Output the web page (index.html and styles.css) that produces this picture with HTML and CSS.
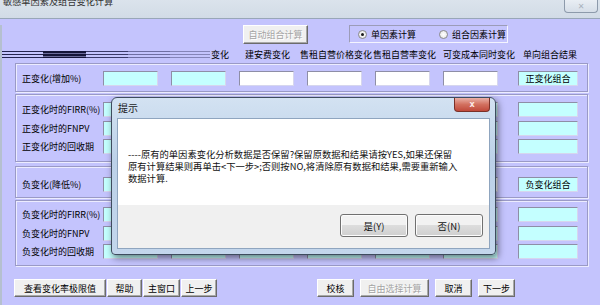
FILE: index.html
```html
<!DOCTYPE html>
<html lang="zh-CN">
<head>
    <meta charset="UTF-8">
    <meta name="viewport" content="width=device-width, initial-scale=1.0">
    <title>敏感单因素及组合变化计算</title>
    <link rel="stylesheet" href="styles.css">
</head>
<body>
    <div class="window">
        <div class="titlebar">
            <span class="title">敏感单因素及组合变化计算</span>
            <span class="close">✕</span>
        </div>

        <div class="client">
            <div class="toolbar">
                <button class="btn disabled">自动组合计算</button>
                <div class="radio-box">
                    <label class="radio"><span class="dot checked"></span>单因素计算</label>
                    <label class="radio second"><span class="dot"></span>组合因素计算</label>
                </div>
            </div>

            <!-- cabecera de columnas -->
            <div class="colhead">
                <div class="squish">
                    <span class="s1"></span><span class="s2"></span><span class="s3"></span><span class="s4"></span><span class="s5"></span>
                </div>
                <span>变化</span>
                <span>建安费变化</span>
                <span>售租自营价格变化</span>
                <span>售租自营率变化</span>
                <span>可变成本同时变化</span>
                <span>单向组合结果</span>
            </div>

            <div class="group g1">
                <div class="row">
                    <span class="lbl">正变化(增加%)</span>
                    <div class="cells">
                        <span class="box cyan"></span><span class="box cyan"></span>
                        <span class="box"></span><span class="box"></span><span class="box"></span><span class="box"></span>
                    </div>
                    <span class="box cyan result">正变化组合</span>
                </div>
            </div>

            <div class="group g2">
                <div class="row">
                    <span class="lbl">正变化时的FIRR(%)</span>
                    <div class="cells">
                        <span class="box cyan"></span><span class="box cyan"></span><span class="box cyan"></span>
                        <span class="box cyan"></span><span class="box cyan"></span><span class="box cyan"></span>
                    </div>
                    <span class="box cyan result"></span>
                </div>
                <div class="row">
                    <span class="lbl">正变化时的FNPV</span>
                    <div class="cells">
                        <span class="box cyan"></span><span class="box cyan"></span><span class="box cyan"></span>
                        <span class="box cyan"></span><span class="box cyan"></span><span class="box cyan"></span>
                    </div>
                    <span class="box cyan result"></span>
                </div>
                <div class="row">
                    <span class="lbl">正变化时的回收期</span>
                    <div class="cells">
                        <span class="box cyan"></span><span class="box cyan"></span><span class="box cyan"></span>
                        <span class="box cyan"></span><span class="box cyan"></span><span class="box cyan"></span>
                    </div>
                    <span class="box cyan result"></span>
                </div>
            </div>

            <div class="group g3">
                <div class="row">
                    <span class="lbl">负变化(降低%)</span>
                    <div class="cells">
                        <span class="box cyan"></span><span class="box cyan"></span>
                        <span class="box"></span><span class="box"></span><span class="box"></span><span class="box"></span>
                    </div>
                    <span class="box cyan result">负变化组合</span>
                </div>
            </div>

            <div class="group g4">
                <div class="row">
                    <span class="lbl">负变化时的FIRR(%)</span>
                    <div class="cells">
                        <span class="box cyan"></span><span class="box cyan"></span><span class="box cyan"></span>
                        <span class="box cyan"></span><span class="box cyan"></span><span class="box cyan"></span>
                    </div>
                    <span class="box cyan result"></span>
                </div>
                <div class="row">
                    <span class="lbl">负变化时的FNPV</span>
                    <div class="cells">
                        <span class="box cyan"></span><span class="box cyan"></span><span class="box cyan"></span>
                        <span class="box cyan"></span><span class="box cyan"></span><span class="box cyan"></span>
                    </div>
                    <span class="box cyan result"></span>
                </div>
                <div class="row">
                    <span class="lbl">负变化时的回收期</span>
                    <div class="cells">
                        <span class="box cyan"></span><span class="box cyan"></span><span class="box cyan"></span>
                        <span class="box cyan"></span><span class="box cyan"></span><span class="box cyan"></span>
                    </div>
                    <span class="box cyan result"></span>
                </div>
            </div>

            <div class="footer">
                <div class="left">
                    <button class="btn b-limite">查看变化率极限值</button>
                    <button class="btn b-ayuda">帮助</button>
                    <button class="btn b-main">主窗口</button>
                    <button class="btn b-prev">上一步</button>
                </div>
                <div class="right">
                    <button class="btn b-small">校核</button>
                    <button class="btn b-libre disabled">自由选择计算</button>
                    <button class="btn b-small">取消</button>
                    <button class="btn b-small">下一步</button>
                </div>
            </div>
        </div>

        <!-- cuadro de aviso -->
        <div class="dialog">
            <div class="dlg-title">
                <span class="dlg-text">提示</span>
                <span class="dlg-close">x</span>
            </div>
            <div class="dlg-body">
                <div class="msg">
                    <p>----原有的单因素变化分析数据是否保留?保留原数据和结果请按YES,如果还保留</p>
                    <p>原有计算结果则再单击&lt;下一步&gt;;否则按NO,将清除原有数据和结果,需要重新输入</p>
                    <p>数据计算.</p>
                </div>
                <div class="actions">
                    <button>是(Y)</button>
                    <button>否(N)</button>
                </div>
            </div>
        </div>
    </div>
</body>
</html>
```

FILE: styles.css
```css
* {
    box-sizing: border-box;
}

body {
    margin: 0;
    width: 600px;
    height: 305px;
    overflow: hidden;
    font-family: "Noto Sans CJK SC", "Noto Sans", sans-serif;
    font-size: 9px;
    color: #000;
    background-color: #c4c4fd;
}

.window {
    position: relative;
    width: 600px;
    height: 305px;
}

.titlebar {
    height: 19px;
    display: flex;
    justify-content: space-between;
    align-items: flex-start;
    background: linear-gradient(#dbe3ec, #d2dbe6);
    border-bottom: 1px solid #98a6b8;
    overflow: hidden;
}

.title {
    display: block;
    margin-top: -4px;
    padding-left: 3px;
    line-height: 10px;
    font-size: 9.2px;
    color: #333;
}

.close {
    width: 34px;
    height: 13px;
    margin-right: 2px;
    border: 1px solid #8d9aab;
    border-top: 0;
    border-radius: 0 0 4px 4px;
    background: linear-gradient(#e9eef4, #d6dee8);
    color: #a9b2bd;
    font-family: "DejaVu Sans", sans-serif;
    font-size: 8px;
    display: flex;
    align-items: center;
    justify-content: center;
}

.client {
    border-left: 2px solid #b5c0cf;
    height: 286px;
}

button {
    font-family: inherit;
    font-size: 9px;
    padding: 0;
    margin: 0;
    cursor: pointer;
}

.btn {
    background-color: #f0f0f0;
    color: #000;
    border: 1px solid;
    border-color: #fff #6b6b6b #6b6b6b #fff;
    box-shadow: inset -1px -1px 0 #a8a8a8;
    height: 18px;
    white-space: nowrap;
}

.btn.disabled {
    color: #a3a3a3;
    text-shadow: 1px 1px 0 #fff;
}

.toolbar {
    display: flex;
    align-items: flex-start;
    margin-top: 6px;
    padding-left: 241px;
    height: 19px;
}

.toolbar .btn {
    width: 65px;
    height: 19px;
}

.radio-box {
    margin-left: 41px;
    width: 159px;
    height: 18px;
    display: flex;
    align-items: center;
    padding-left: 8px;
    border: 1px solid;
    border-color: #9c9cb8 #f4f4ff #f4f4ff #9c9cb8;
}

.radio {
    display: flex;
    align-items: center;
    gap: 4px;
}

.radio.second {
    margin-left: 23px;
}

.dot {
    width: 9px;
    height: 9px;
    border-radius: 50%;
    border: 1px solid #8a8a8a;
    background: radial-gradient(#ffffff, #e2e2e2);
    display: flex;
    align-items: center;
    justify-content: center;
}

.dot.checked::after {
    content: "";
    width: 3px;
    height: 3px;
    border-radius: 50%;
    background-color: #1a1a1a;
}

.colhead {
    display: grid;
    grid-template-columns: 209px 34px 55px 73px 70px 80px 60px;
    align-items: center;
    height: 11px;
    margin-top: 5px;
    white-space: nowrap;
    line-height: 11px;
}

.squish {
    display: flex;
    width: 208px;
    height: 7px;
}

.squish span {
    flex: none;
    height: 7px;
}

.s1 {
    width: 41px;
    background: repeating-linear-gradient(to bottom, #23234e 0 1px, transparent 1px 3px);
}

.s2 {
    width: 43px;
    background: repeating-linear-gradient(to bottom, #15153a 0 2px, #6c6c9c 2px 3px);
}

.s3 {
    width: 42px;
    background: repeating-linear-gradient(to bottom, #3a3a68 0 1px, transparent 1px 3px);
}

.s4 {
    width: 42px;
    background: repeating-linear-gradient(to bottom, #6f6fa2 0 1px, transparent 1px 3px);
}

.s5 {
    width: 40px;
    background: repeating-linear-gradient(to bottom, #8585b8 0 1px, transparent 1px 3px);
}

.group {
    margin-left: 13px;
    width: 573px;
    border: 1px solid #9a9ac6;
    box-shadow: inset 1px 1px 0 #ececff, 1px 1px 0 #ececff;
    padding-left: 6px;
    display: flex;
    flex-direction: column;
    gap: 3.5px;
}

.g1 {
    margin-top: 3px;
    padding-top: 7px;
    padding-bottom: 5px;
}

.g2 {
    margin-top: 2px;
    padding-top: 7px;
    padding-bottom: 7px;
}

.g3 {
    margin-top: 4px;
    padding-top: 10px;
    padding-bottom: 5px;
}

.g4 {
    margin-top: 2px;
    padding-top: 6px;
    padding-bottom: 6px;
}

.row {
    display: flex;
    align-items: center;
    height: 15px;
}

.lbl {
    width: 81px;
    white-space: nowrap;
}

.cells {
    display: flex;
    gap: 13px;
}

.box {
    width: 55px;
    height: 15px;
    background-color: #fff;
    border: 1px solid;
    border-color: #8e8ea6 #d6d6ee #d6d6ee #8e8ea6;
}

.cyan {
    background-color: #c4ffff;
}

.result {
    width: 60px;
    margin-left: 20px;
    display: flex;
    align-items: center;
    justify-content: center;
    white-space: nowrap;
}

.footer {
    display: flex;
    margin-top: 13px;
    padding-left: 12px;
    height: 18px;
}

.footer .left {
    display: flex;
    gap: 1px;
}

.footer .right {
    display: flex;
    gap: 6px;
    margin-left: 100px;
}

.b-limite { width: 92px; }
.b-ayuda { width: 35px; }
.b-main { width: 37px; }
.b-prev { width: 36px; }
.b-small { width: 37px; }
.b-libre { width: 69px; }

/* ventana de aviso */
.dialog {
    position: absolute;
    left: 111px;
    top: 97px;
    width: 385px;
    height: 158px;
    border: 1px solid #3e4c5e;
    border-radius: 6px 6px 4px 4px;
    background: linear-gradient(#d3e2f2, #bcd1e8 40%, #c3d6ec);
    padding: 0 5px 5px;
    box-shadow: 2px 3px 7px rgba(0, 0, 0, 0.5);
    display: flex;
    flex-direction: column;
}

.dlg-title {
    height: 20px;
    display: flex;
    justify-content: space-between;
    align-items: flex-start;
}

.dlg-text {
    font-size: 10px;
    line-height: 20px;
    padding-left: 1px;
    color: #1b1b1b;
}

.dlg-close {
    width: 36px;
    height: 14px;
    border: 1px solid #7a3028;
    border-top: 0;
    border-radius: 0 0 4px 4px;
    background: linear-gradient(#eab0a6, #d2705f 50%, #c0493b);
    color: #fbe9e6;
    font-family: "DejaVu Sans", sans-serif;
    font-weight: bold;
    font-size: 8px;
    display: flex;
    align-items: center;
    justify-content: center;
}

.dlg-body {
    flex: 1;
    border: 1px solid #8fa5bf;
    background-color: #fff;
    display: flex;
    flex-direction: column;
}

.msg {
    height: 86px;
    padding: 29px 0 0 10px;
    font-size: 9.3px;
    white-space: nowrap;
    color: #111;
    display: flex;
    flex-direction: column;
}

.msg p {
    margin: 0;
    height: 12px;
    line-height: 12px;
}

.actions {
    flex: 1;
    background-color: #f0f0f0;
    display: flex;
    justify-content: flex-end;
    gap: 7px;
    padding: 9px 6px 0 0;
}

.actions button {
    width: 68px;
    height: 23px;
    border: 1px solid #707070;
    border-radius: 3px;
    background: linear-gradient(#f2f2f2 50%, #dddddd 50%, #cfcfcf);
    box-shadow: inset 0 0 0 1px #fcfcfc;
    font-size: 9.5px;
    color: #111;
}
```
